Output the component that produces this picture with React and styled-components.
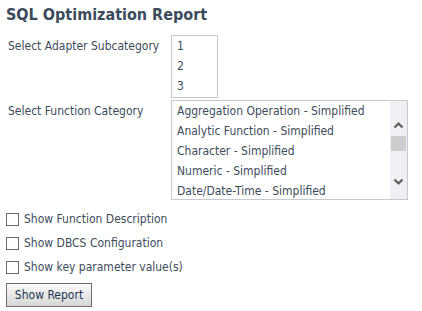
import React from "react";
import styled, { createGlobalStyle } from "styled-components";

const GlobalStyle = createGlobalStyle`
  body {
    margin: 0;
    background: #ffffff;
    font-family: "DejaVu Sans Condensed", "DejaVu Sans", sans-serif;
    font-size: 12px;
    color: #3d4c5b;
  }
`;

const Page = styled.div`
  padding: 3px 6px 0 6px;
`;

const Title = styled.h1`
  margin: 0;
  font-size: 16px;
  font-weight: bold;
  line-height: 24px;
  color: #3b4b5b;
`;

const FormGrid = styled.div`
  display: grid;
  grid-template-columns: 165px auto;
  row-gap: 2px;
  margin-top: 8px;
`;

const Label = styled.div`
  padding: 1px 0 0 2px;
  line-height: 20px;
`;

const ListBox = styled.div`
  display: flex;
  width: ${(p) => p.$width}px;
  height: ${(p) => p.$height}px;
  border: 1px solid #c6c9d0;
  box-sizing: border-box;
  overflow: hidden;
  background: #fff;
`;

const Options = styled.div`
  flex: 1;
  padding-left: 5px;
`;

const Option = styled.div`
  line-height: 20px;
  white-space: nowrap;
`;

const ScrollBar = styled.div`
  width: 17px;
  background: #f0eff4;
  display: flex;
  flex-direction: column;
  align-items: center;
  padding: 20px 0 13px;
`;

const Thumb = styled.div`
  width: 15px;
  height: 15px;
  background: #cdcdcd;
  margin-top: 7px;
`;

const Spacer = styled.div`
  flex: 1;
`;

const Arrow = styled.svg`
  display: block;
`;

const Checks = styled.div`
  margin-top: 7px;
`;

const CheckRow = styled.label`
  display: flex;
  align-items: center;
  height: 24px;
  gap: 5px;
`;

const Box = styled.input.attrs({ type: "checkbox" })`
  appearance: none;
  margin: 0;
  width: 13px;
  height: 13px;
  border: 1px solid #6b6b6b;
  background: #fff;
`;

const Button = styled.button`
  margin-top: 4px;
  width: 86px;
  height: 24px;
  padding: 0;
  border: 1px solid #6e6e6e;
  background: linear-gradient(#fbfbfb, #d6d6d6);
  font-family: inherit;
  font-size: 12px;
  color: #1e3656;
`;

const Chevron = ({ up }) => (
  <Arrow width="11" height="8" viewBox="0 0 11 8">
    <polyline
      points={up ? "1.5,6.5 5.5,2.5 9.5,6.5" : "1.5,1.5 5.5,5.5 9.5,1.5"}
      fill="none"
      stroke="#5e5e5e"
      strokeWidth="2.2"
    />
  </Arrow>
);

const categories = [
  "Aggregation Operation - Simplified",
  "Analytic Function - Simplified",
  "Character - Simplified",
  "Numeric - Simplified",
  "Date/Date-Time - Simplified",
];

export default function App() {
  return (
    <Page>
      <GlobalStyle />
      <Title>SQL Optimization Report</Title>
      <FormGrid>
        <Label>Select Adapter Subcategory</Label>
        <ListBox $width={47} $height={63}>
          <Options>
            <Option>1</Option>
            <Option>2</Option>
            <Option>3</Option>
          </Options>
        </ListBox>
        <Label>Select Function Category</Label>
        <ListBox $width={237} $height={100}>
          <Options>
            {categories.map((c) => (
              <Option key={c}>{c}</Option>
            ))}
          </Options>
          <ScrollBar>
            <Chevron up />
            <Thumb />
            <Spacer />
            <Chevron />
          </ScrollBar>
        </ListBox>
      </FormGrid>
      <Checks>
        <CheckRow>
          <Box />
          Show Function Description
        </CheckRow>
        <CheckRow>
          <Box />
          Show DBCS Configuration
        </CheckRow>
        <CheckRow>
          <Box />
          Show key parameter value(s)
        </CheckRow>
      </Checks>
      <Button>Show Report</Button>
    </Page>
  );
}
